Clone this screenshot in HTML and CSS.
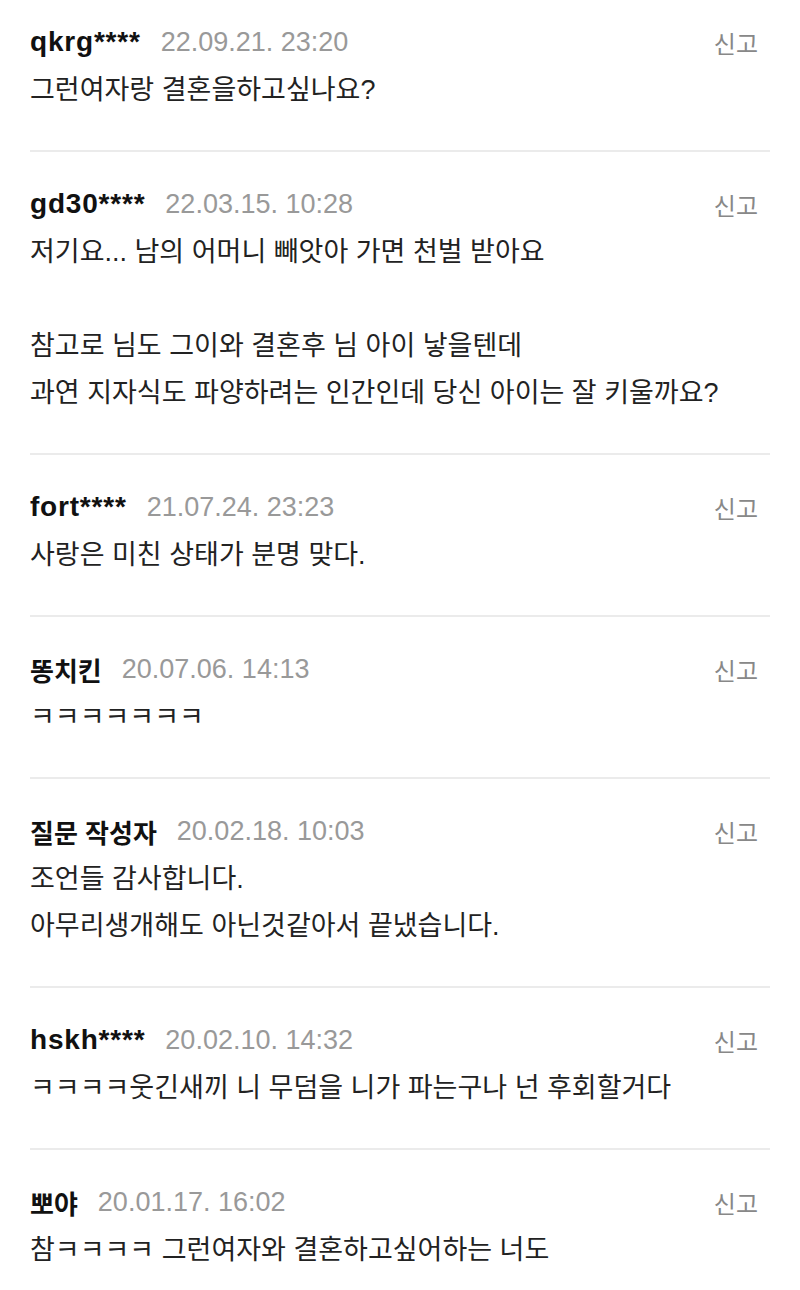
FILE: index.html
```html
<!DOCTYPE html>
<html>
  <head>
    <meta charset="UTF-8">
    <meta name="viewport" content="width=device-width, initial-scale=1.0">
    <title>답변 댓글</title>
    <link rel="stylesheet" href="styles.css">
  </head>
  <body>

    <ul class="comment-list">
      <li class="comment first">
        <div class="comment-head">
          <span class="nick latin">qkrg****</span>
          <span class="date">22.09.21. 23:20</span>
          <span class="report">신고</span>
        </div>
        <p class="comment-text">그런여자랑 결혼을하고싶나요?</p>
      </li>

      <li class="comment">
        <div class="comment-head">
          <span class="nick latin">gd30****</span>
          <span class="date">22.03.15. 10:28</span>
          <span class="report">신고</span>
        </div>
        <p class="comment-text">저기요... 남의 어머니 빼앗아 가면 천벌 받아요<br><br>참고로 님도 그이와 결혼후 님 아이 낳을텐데<br>과연 지자식도 파양하려는 인간인데 당신 아이는 잘 키울까요?</p>
      </li>

      <li class="comment">
        <div class="comment-head">
          <span class="nick latin">fort****</span>
          <span class="date">21.07.24. 23:23</span>
          <span class="report">신고</span>
        </div>
        <p class="comment-text">사랑은 미친 상태가 분명 맞다.</p>
      </li>

      <li class="comment">
        <div class="comment-head">
          <span class="nick">똥치킨</span>
          <span class="date">20.07.06. 14:13</span>
          <span class="report">신고</span>
        </div>
        <p class="comment-text">ㅋㅋㅋㅋㅋㅋㅋ</p>
      </li>

      <li class="comment">
        <div class="comment-head">
          <span class="nick">질문 작성자</span>
          <span class="date">20.02.18. 10:03</span>
          <span class="report">신고</span>
        </div>
        <p class="comment-text">조언들 감사합니다.<br>아무리생개해도 아닌것같아서 끝냈습니다.</p>
      </li>

      <li class="comment">
        <div class="comment-head">
          <span class="nick latin">hskh****</span>
          <span class="date">20.02.10. 14:32</span>
          <span class="report">신고</span>
        </div>
        <p class="comment-text">ㅋㅋㅋㅋ웃긴새끼 니 무덤을 니가 파는구나 넌 후회할거다</p>
      </li>

      <li class="comment">
        <div class="comment-head">
          <span class="nick">뽀야</span>
          <span class="date">20.01.17. 16:02</span>
          <span class="report">신고</span>
        </div>
        <p class="comment-text">참ㅋㅋㅋㅋ 그런여자와 결혼하고싶어하는 너도</p>
      </li>
    </ul>

  </body>
</html>
```

FILE: styles.css
```css
body {
  font-family: "Liberation Sans", "Noto Sans CJK KR", sans-serif;
  margin: 0;
  padding: 0;
  background-color: #fff;
  color: #222;
}

.comment-list {
  list-style: none;
  margin: 0;
  padding: 0 30px;
}

.comment {
  padding: 29px 0 36px;
  border-bottom: 2px solid #ebebeb;
}

.comment.first {
  padding-top: 19px;
}

.comment:last-child {
  border-bottom: none;
}

.comment-head {
  display: flex;
  align-items: center;
  height: 46px;
}

.nick {
  font-size: 26px;
  font-weight: bold;
  color: #111;
  margin-right: 20px;
}

/* latin ids look a bit wider in the app font */
.nick.latin {
  font-size: 28px;
  letter-spacing: 0.8px;
}

.date {
  font-size: 27px;
  color: #999;
}

.report {
  margin-left: auto;
  margin-right: 12px;
  font-size: 24px;
  color: #888;
}

.comment-text {
  margin: 2px 0 0;
  font-size: 27px;
  line-height: 47px;
  color: #222;
}
```
